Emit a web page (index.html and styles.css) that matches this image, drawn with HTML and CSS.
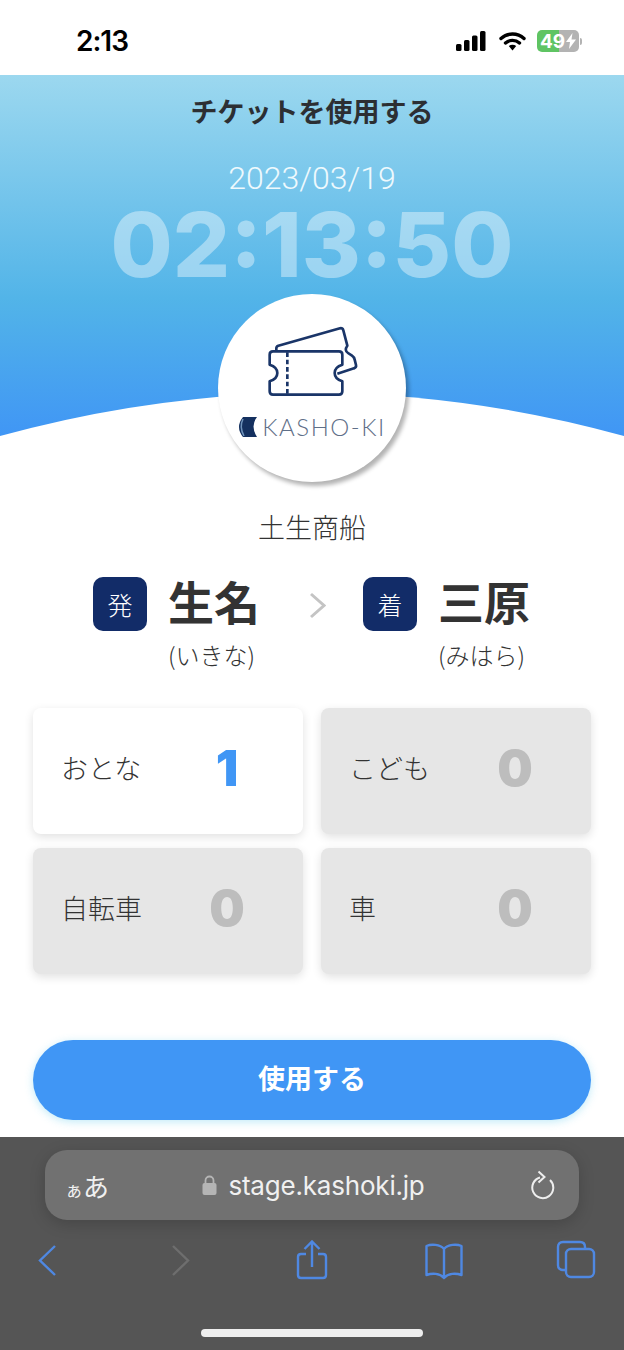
FILE: index.html
```html
<!DOCTYPE html>
<html lang="ja">
<head>
    <meta charset="UTF-8">
    <meta name="viewport" content="width=device-width, initial-scale=1.0">
    <title>チケットを使用する</title>
    <link rel="stylesheet" href="styles.css">
</head>
<body>
    <div class="status-bar">
        <span class="status-time">2:13</span>
        <div class="status-icons">
            <svg width="32" height="20" viewBox="0 0 32 20">
                <rect x="1" y="13" width="5.5" height="7" rx="1.5"/>
                <rect x="9" y="9" width="5.5" height="11" rx="1.5"/>
                <rect x="17" y="4.5" width="5.5" height="15.5" rx="1.5"/>
                <rect x="25" y="0" width="5.5" height="20" rx="1.5"/>
            </svg>
            <svg width="27" height="20" viewBox="0 0 27 20">
                <path d="M2 7.5 C8.500 1.500 18.500 1.500 25 7.500 M6.500 12 C10.500 8.500 16.500 8.500 20.500 12" fill="none" stroke="#000" stroke-width="3.4" stroke-linecap="round"/>
                <path d="M9.800 15 C12 13.300 15 13.300 17.200 15 L13.500 19.500 Z"/>
            </svg>
            <div class="battery">
                <span>49</span>
                <svg width="10" height="16" viewBox="0 0 10 16"><path d="M6.500 0 L0 9 H4 L3 16 L10 6.500 H5.500 Z" fill="#fff"/></svg>
            </div>
            <div class="battery-nub"></div>
        </div>
    </div>

    <div class="hero">
        <svg class="hero-curve" width="624" height="43" viewBox="0 0 624 43">
            <path d="M0 43 Q312 -43 624 43 Z" fill="#fff"/>
        </svg>
        <h1 class="hero-title">チケットを使用する</h1>
        <div class="hero-date">2023/03/19</div>
        <div class="hero-clock">02:13:50</div>
        <div class="logo-circle">
            <svg class="ticket-icon" width="96" height="80" viewBox="0 0 288 240" fill="none" stroke="#1a3568" stroke-width="8" stroke-linejoin="round">
                <path d="M37 84 V76 Q37 70 43 68 L228 16 Q236 14 238 22 L250 68 Q240 82 252 90 L264 98 Q270 102 272 110 L276 126 Q278 134 270 136 L220 152"/>
                <path d="M27 85 H225 Q235 85 235 95 V125 Q212 132 212 150 Q212 168 235 175 V205 Q235 215 225 215 H27 Q17 215 17 205 V175 Q40 168 40 150 Q40 132 17 125 V95 Q17 85 27 85 Z"/>
                <path d="M70 88 V212" stroke-dasharray="14 8"/>
            </svg>
            <div class="logo-row">
                <svg width="19" height="20" viewBox="0 0 19 20">
                    <path d="M5 0 H19 Q12 9 19 20 H5 Q-3 10 5 0 Z" fill="#14305f"/>
                    <path d="M5 2 Q1 10 6 19" fill="none" stroke="#6f93bb" stroke-width="1.500"/>
                </svg>
                <span class="logo-text">KASHO-KI</span>
            </div>
        </div>
    </div>

    <div class="company">土生商船</div>

    <div class="route">
        <div class="stop">
            <div class="stop-badge">発</div>
            <div>
                <div class="stop-name">生名</div>
                <div class="stop-reading">(いきな)</div>
            </div>
        </div>
        <svg class="route-arrow" width="17" height="27" viewBox="0 0 17 27">
            <path d="M2 2 L15 13.500 L2 25" fill="none" stroke="#c4c4c4" stroke-width="3"/>
        </svg>
        <div class="stop">
            <div class="stop-badge">着</div>
            <div>
                <div class="stop-name">三原</div>
                <div class="stop-reading">(みはら)</div>
            </div>
        </div>
    </div>

    <div class="tickets">
        <div class="ticket ticket-active">
            <span class="ticket-label">おとな</span>
            <span class="ticket-count">1</span>
        </div>
        <div class="ticket">
            <span class="ticket-label">こども</span>
            <span class="ticket-count">0</span>
        </div>
        <div class="ticket">
            <span class="ticket-label">自転車</span>
            <span class="ticket-count">0</span>
        </div>
        <div class="ticket">
            <span class="ticket-label">車</span>
            <span class="ticket-count">0</span>
        </div>
    </div>

    <button class="use-btn">使用する</button>

    <div class="browser-bar">
        <div class="address-bar">
            <span class="address-aa"><small>ぁ</small>あ</span>
            <div class="address-url">
                <svg width="15" height="20" viewBox="0 0 15 20">
                    <path d="M3.500 9 V5.500 a4 4 0 0 1 8 0 V9" fill="none" stroke="#b5b5b5" stroke-width="1.800"/>
                    <rect x="0.500" y="8" width="14" height="12" rx="2" fill="#b5b5b5"/>
                </svg>
                <span>stage.kashoki.jp</span>
            </div>
            <svg class="address-reload" width="26" height="30" viewBox="0 0 26 30" fill="none" stroke="#eee" stroke-width="2">
                <path d="M10 7.500 A10.500 10.500 0 1 0 20 10"/>
                <path d="M8.500 1.500 L14.500 7 L8.500 12.500"/>
            </svg>
        </div>
        <div class="browser-icons">
            <svg width="40" height="40" viewBox="0 0 40 40" fill="none" stroke="#4f88e2" stroke-width="2.400">
                <path d="M27 6 L12 20.500 L27 35"/>
            </svg>
            <svg width="40" height="40" viewBox="0 0 40 40" fill="none" stroke="#6e6e6e" stroke-width="2.400">
                <path d="M13 6 L28 20.500 L13 35"/>
            </svg>
            <svg width="40" height="40" viewBox="0 0 40 40" fill="none" stroke="#4f88e2" stroke-width="2.400">
                <path d="M14 14 H9 Q6 14 6 17 V35 Q6 38 9 38 H31 Q34 38 34 35 V17 Q34 14 31 14 H26"/>
                <path d="M20 27 V2 M12.500 9 L20 1.500 L27.500 9"/>
            </svg>
            <svg width="40" height="40" viewBox="0 0 40 40" fill="none" stroke="#4f88e2" stroke-width="2.400" stroke-linejoin="round">
                <path d="M20 9 C16 4 7 4 2.500 6 V35 C8 33 16 33 20 38 C24 33 32 33 37.500 35 V6 C33 4 24 4 20 9 Z M20 9 V38"/>
            </svg>
            <svg width="40" height="40" viewBox="0 0 40 40" fill="none" stroke="#4f88e2" stroke-width="2.400">
                <rect x="10" y="9" width="28" height="28" rx="5"/>
                <path d="M10 30 H7 Q2 30 2 25 V7 Q2 2 7 2 H24 Q29 2 29 7 V9"/>
            </svg>
        </div>
        <div class="home-indicator"></div>
    </div>
</body>
</html>
```

FILE: styles.css
```css
html, body {
    margin: 0;
    padding: 0;
}
body {
    width: 624px;
    height: 1350px;
    overflow: hidden;
    background-color: #fff;
    color: #333;
    font-family: "Noto Sans CJK JP", "Noto Sans", sans-serif;
}

/* status bar */
.status-bar {
    display: flex;
    justify-content: space-between;
    align-items: center;
    box-sizing: border-box;
    height: 75px;
    padding: 7px 42px 0 76px;
}
.status-time {
    color: #000;
    font-family: Inter, sans-serif;
    font-size: 28px;
    font-weight: 600;
    letter-spacing: -1px;
}
.status-icons {
    display: flex;
    align-items: center;
    gap: 12px;
}
.battery {
    display: flex;
    justify-content: center;
    align-items: center;
    gap: 1px;
    width: 42px;
    height: 22px;
    margin-left: -1px;
    border-radius: 5px;
    background: linear-gradient(90deg, #5fc463 0, #5fc463 52%, #b3b3b3 52%);
    color: #fff;
    font-family: Inter, sans-serif;
    font-size: 19px;
    font-weight: 700;
}
.battery-nub {
    width: 2px;
    height: 7px;
    margin-left: -11px;
    border-radius: 0 2px 2px 0;
    background-color: #b3b3b3;
}

/* hero */
.hero {
    position: relative;
    display: flex;
    flex-direction: column;
    align-items: center;
    height: 361px;
    background: linear-gradient(180deg, #9cd8ef 0%, #52b4e8 62%, #4096f5 100%);
}
.hero-curve {
    position: absolute;
    left: 0;
    bottom: 0;
}
.hero-title {
    flex: none;
    margin: 20px 0 0;
    color: #2c2f33;
    font-size: 27px;
    font-weight: 700;
    line-height: 32px;
}
.hero-date {
    flex: none;
    margin-top: 33px;
    color: #eef9fd;
    font-family: Roboto, sans-serif;
    font-size: 32px;
    font-weight: 300;
    line-height: 36px;
}
.hero-clock {
    flex: none;
    margin-top: 9px;
    color: rgba(255, 255, 255, 0.4);
    font-family: Inter, sans-serif;
    font-size: 90px;
    font-weight: 800;
    line-height: 80px;
}
.logo-circle {
    position: relative;
    flex: none;
    display: flex;
    flex-direction: column;
    align-items: center;
    box-sizing: border-box;
    width: 188px;
    height: 188px;
    margin-top: 9px;
    padding-top: 29px;
    border-radius: 50%;
    background-color: #fff;
    box-shadow: 3px 4px 4px rgba(0, 0, 0, 0.3);
}
.logo-row {
    display: flex;
    align-items: center;
    gap: 5px;
    margin-top: 12px;
}
.logo-text {
    color: #5f6f88;
    font-family: Lato, sans-serif;
    font-size: 24px;
    font-weight: 300;
    letter-spacing: 1.5px;
    line-height: 24px;
}

/* route */
.company {
    margin-top: 75px;
    font-size: 27px;
    font-weight: 300;
    line-height: 32px;
    text-align: center;
}
.route {
    display: flex;
    justify-content: center;
    margin-top: 34px;
    padding-right: 3px;
}
.stop {
    display: flex;
    gap: 21px;
}
.stop-badge {
    display: flex;
    justify-content: center;
    align-items: center;
    width: 54px;
    height: 54px;
    border-radius: 10px;
    background-color: #122c68;
    color: #fff;
    font-size: 25px;
    font-weight: 300;
}
.stop-name {
    width: 90px;
    font-size: 46px;
    font-weight: 700;
    line-height: 46px;
    white-space: nowrap;
}
.stop-reading {
    margin-top: 16px;
    font-size: 24px;
    font-weight: 300;
    line-height: 32px;
    white-space: nowrap;
}
.route-arrow {
    margin: 15px 37px 0 51px;
}

/* ticket counts */
.tickets {
    display: grid;
    grid-template-columns: 270px 270px;
    grid-auto-rows: 126px;
    gap: 14px 18px;
    margin-top: 37px;
    padding: 0 33px;
}
.ticket {
    display: flex;
    align-items: center;
    box-sizing: border-box;
    padding: 0 44px 0 28px;
    border-radius: 8px;
    background-color: #e6e6e6;
    box-shadow: 0 3px 10px rgba(0, 0, 0, 0.12);
}
.ticket-active {
    background-color: #fff;
}
.ticket-label {
    flex: 1;
    margin-top: -8px;
    font-size: 27px;
    font-weight: 300;
}
.ticket-count {
    width: 64px;
    margin-top: -6px;
    color: #bdbdbd;
    font-family: Inter, sans-serif;
    font-size: 50px;
    font-weight: 900;
    text-align: center;
}
.ticket-active .ticket-count {
    color: #4096f5;
}

/* use button */
.use-btn {
    display: block;
    width: 558px;
    height: 80px;
    margin: 66px 0 0 33px;
    padding: 0 0 5px;
    border: none;
    border-radius: 40px;
    background-color: #4096f5;
    box-shadow: 0 2px 8px rgba(120, 210, 240, 0.45);
    color: #fff;
    font-family: inherit;
    font-size: 27px;
    font-weight: 700;
}

/* browser chrome */
.browser-bar {
    margin-top: 17px;
    padding-top: 13px;
    height: 200px;
    background-color: #555;
}
.address-bar {
    display: grid;
    grid-template-columns: 1fr auto 1fr;
    align-items: center;
    box-sizing: border-box;
    width: 534px;
    height: 70px;
    margin-left: 45px;
    padding: 0 23px 0 20px;
    border-radius: 22px;
    background-color: #717171;
    box-shadow: 0 4px 16px rgba(0, 0, 0, 0.18);
    color: #f0f0f0;
}
.address-aa {
    font-size: 26px;
}
.address-aa small {
    font-size: 18px;
}
.address-url {
    display: flex;
    align-items: center;
    gap: 11px;
    margin-left: 6px;
    font-family: Inter, sans-serif;
    font-size: 26px;
    letter-spacing: -0.2px;
}
.address-reload {
    justify-self: end;
}
.browser-icons {
    display: flex;
    justify-content: space-between;
    margin-top: 20px;
    padding: 0 28px 0 28px;
}
.home-indicator {
    width: 222px;
    height: 8px;
    margin: 49px 0 0 201px;
    border-radius: 4px;
    background-color: #eee;
}
```
